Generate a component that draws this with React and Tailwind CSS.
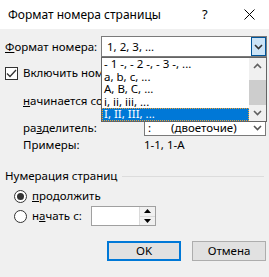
import React from "react";

const Chevron = ({ up = false, className = "" }) => (
  <svg width="9" height="6" viewBox="0 0 9 6" className={className}>
    <path
      d={up ? "M1 5 L4.5 1.5 L8 5" : "M1 1 L4.5 4.5 L8 1"}
      fill="none"
      stroke="currentColor"
      strokeWidth="1.6"
    />
  </svg>
);

const items = ["- 1 -, - 2 -, - 3 -, ...", "a, b, c, ...", "A, B, C, ...", "i, ii, iii, ...", "I, II, III, ..."];

export default function App() {
  return (
    <div
      className="relative w-[269px] h-[277px] overflow-hidden bg-[#f0f0f0] text-[11.5px] text-black whitespace-nowrap"
      style={{ fontFamily: '"Noto Sans", "Liberation Sans", sans-serif' }}
    >
      {/* заголовок */}
      <div className="h-[29px] bg-white flex items-center pl-[8px]">
        <span className="flex-1 text-[12px]">Формат номера страницы</span>
        <span className="w-[12px] text-[13px] mr-[30px]">?</span>
        <svg width="11" height="11" viewBox="0 0 11 11" className="mr-[14px]">
          <path d="M0.5 0.5 L10.5 10.5 M10.5 0.5 L0.5 10.5" stroke="#000" strokeWidth="1" />
        </svg>
      </div>

      <div className="pl-[5px]">
        {/* формат номера */}
        <div className="mt-[7px] h-[21px] flex items-center">
          <span className="w-[96px]">
            <span className="underline">Ф</span>ормат номера:
          </span>
          <div className="w-[166px] h-[21px] bg-white border border-[#7a7a7a] flex items-center">
            <span className="flex-1 pl-[5px]">1, 2, 3, ...</span>
            <div className="w-[15px] h-[19px] bg-[#cce4f7] border border-[#005499] flex items-center justify-center text-[#333]">
              <Chevron />
            </div>
          </div>
        </div>

        {/* включить номер главы */}
        <div className="mt-[7px] h-[18px] flex items-center">
          <div className="w-[13px] h-[13px] border border-[#333] bg-white flex items-center justify-center">
            <svg width="11" height="9" viewBox="0 0 11 9">
              <path d="M1 4.5 L4 7.5 L10 1" fill="none" stroke="#333" strokeWidth="1.3" />
            </svg>
          </div>
          <span className="ml-[5px] w-[78px] overflow-hidden">Включить номер главы</span>
        </div>

        <div className="pl-[18px]">
          <div className="mt-[11px] h-[16px] flex items-center">
            <span className="w-[78px] overflow-hidden">
              <span className="underline">н</span>ачинается со стиля:
            </span>
          </div>

          <div className="mt-[10px] h-[17px] flex items-center">
            <span className="w-[121px]">
              ра<span className="underline">з</span>делитель:
            </span>
            <div className="w-[122px] h-[17px] bg-white border border-[#7a7a7a] flex items-center">
              <span className="pl-[3px] w-[26px]">:</span>
              <span className="flex-1">(двоеточие)</span>
              <div className="w-[15px] flex items-center justify-center text-[#555]">
                <Chevron />
              </div>
            </div>
          </div>

          <div className="mt-[1px] h-[16px] flex items-center">
            <span className="w-[121px]">Примеры:</span>
            <span>1-1, 1-A</span>
          </div>
        </div>

        {/* нумерация страниц */}
        <div className="mt-[15px] h-[16px] flex items-center pr-[5px]">
          <span>Нумерация страниц</span>
          <div className="flex-1 ml-[5px] h-px bg-[#dcdcdc]" />
        </div>

        <div className="pl-[9px]">
          <div className="mt-[4px] h-[16px] flex items-center">
            <div className="w-[13px] h-[13px] rounded-full border border-[#333] bg-white flex items-center justify-center">
              <div className="w-[7px] h-[7px] rounded-full bg-[#333]" />
            </div>
            <span className="ml-[5px]">
              <span className="underline">п</span>родолжить
            </span>
          </div>

          <div className="mt-[2px] h-[20px] flex items-center">
            <div className="w-[13px] h-[13px] rounded-full border border-[#333] bg-white" />
            <span className="ml-[5px] w-[59px]">
              н<span className="underline">а</span>чать с:
            </span>
            <div className="w-[65px] h-[20px] bg-white border border-[#a0a0a0] flex">
              <div className="flex-1" />
              <div className="w-[16px] flex flex-col bg-[#f0f0f0] border-l border-[#dadada]">
                <div className="flex-1 flex items-center justify-center border-b border-[#dadada]">
                  <svg width="7" height="4" viewBox="0 0 7 4">
                    <path d="M0 4 L3.5 0 L7 4 Z" fill="#000" />
                  </svg>
                </div>
                <div className="flex-1 flex items-center justify-center">
                  <svg width="7" height="4" viewBox="0 0 7 4">
                    <path d="M0 0 L3.5 4 L7 0 Z" fill="#000" />
                  </svg>
                </div>
              </div>
            </div>
          </div>
        </div>

        {/* кнопки */}
        <div className="mt-[15px] flex justify-end gap-[11px] pr-[3px]">
          <button className="w-[74px] h-[20px] bg-[#e1e1e1] border-2 border-[#0078d7] flex items-center justify-center">
            OK
          </button>
          <button className="w-[74px] h-[20px] bg-[#e1e1e1] border border-[#adadad] flex items-center justify-center">
            Отмена
          </button>
        </div>
      </div>

      {/* раскрытый список */}
      <div className="absolute left-[101px] top-[57px] w-[166px] h-[65px] bg-white border border-[#646464] flex">
        <div className="flex-1 flex flex-col">
          {items.map((t, i) => (
            <div
              key={t}
              className={
                i === 4
                  ? "h-[12.6px] leading-[12.6px] pl-[2px] bg-[#0078d7] text-white outline-1 outline-dotted outline-[#f0a030] -outline-offset-1 overflow-hidden"
                  : "h-[12.6px] leading-[12.6px] pl-[2px] overflow-hidden"
              }
            >
              {t}
            </div>
          ))}
        </div>
        <div className="w-[17px] bg-[#f0f0f0] flex flex-col">
          <div className="h-[16px] flex items-center justify-center text-[#606060]">
            <Chevron up />
          </div>
          <div className="flex-1 flex flex-col">
            <div className="h-[6px]" />
            <div className="h-[25px] bg-[#cdcdcd]" />
          </div>
          <div className="h-[16px] flex items-center justify-center text-[#606060]">
            <Chevron />
          </div>
        </div>
      </div>
    </div>
  );
}
